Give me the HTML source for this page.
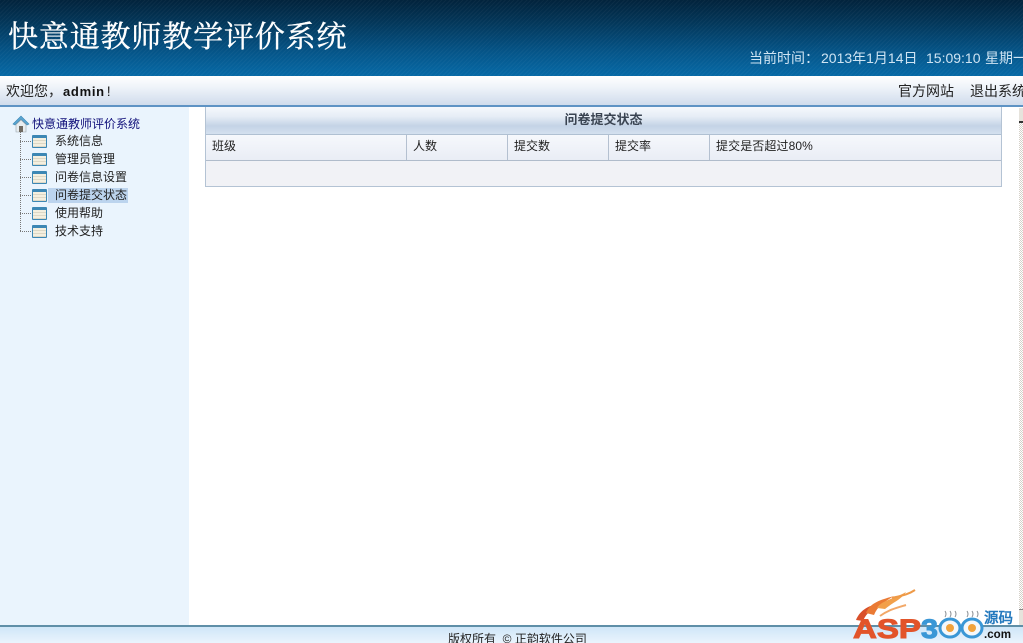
<!DOCTYPE html>
<html lang="zh"><head><meta charset="utf-8"><title>快意通教师教学评价系统</title>
<style>
html,body{margin:0;padding:0;width:1023px;height:643px;overflow:hidden;background:#fff}
body{position:relative;font-family:"Liberation Sans","WenQuanYi Zen Hei","Noto Sans CJK SC",sans-serif;color:#222}
.a{position:absolute;white-space:nowrap}
#hd{left:0;top:0;width:1023px;height:76px;background:repeating-linear-gradient(135deg,rgba(255,255,255,.035) 0 1px,rgba(255,255,255,0) 1px 3px),linear-gradient(#02233c 0,#03375a 30%,#05568a 70%,#0669a6 100%)}
#bar{left:0;top:76px;width:1023px;height:29px;background:linear-gradient(#fff 0,#eef3f9 40%,#d0dcec 100%)}
#ln{left:0;top:105px;width:1023px;height:2px;background:#5e93c4}
#side{left:0;top:107px;width:189px;height:518px;background:#eaf4fd}
#ft{left:0;top:625px;width:1023px;height:2px;background:#5f8fa8}
#ftb{left:0;top:627px;width:1023px;height:16px;background:linear-gradient(#cfe6f8,#eaf4fd)}
#sb{left:1019px;top:108px;width:4px;height:517px;background:repeating-conic-gradient(#d4d0c8 0 25%,#fff 0 50%) 0 0/2px 2px}
#sbt{left:1019px;top:108px;width:4px;height:15px;background:#e6e3dc;border-bottom:2px solid #333;box-sizing:border-box}
#sbb{left:1019px;top:609px;width:4px;height:16px;background:#e6e3dc;border-top:1px solid #888;box-sizing:border-box}
.t{font-size:12px;line-height:14px}
.ic{position:absolute;left:32px;width:15px;height:13px;box-sizing:border-box;border:1.5px solid #3c87b4;border-top-width:3px;border-radius:1px;background:repeating-linear-gradient(#f4efdf 0 2px,#ddd8c6 2px 3px)}
.dh{position:absolute;left:20px;width:11px;border-top:1px dotted #777}
#tb{left:205px;top:107px;width:797px;height:80px;box-sizing:border-box;border:1px solid #b4c3d4;border-top:0;background:#f1f2f6}
#tbh{left:206px;top:107px;width:795px;height:27px;background:linear-gradient(#f5f8fc 0,#e6edf6 35%,#c4d3e6 70%,#d4e0ef 100%);border-bottom:1px solid #b0c0d2;text-align:center;font-size:13px;line-height:26px;font-weight:bold;color:#3a4452}
#tbr{left:206px;top:135px;width:795px;height:25px;background:linear-gradient(#f6f8fc,#e9edf5);border-bottom:1px solid #b0bccb}
.v{position:absolute;top:135px;width:1px;height:25px;background:#b4c0d0}
.c{position:absolute;top:139px;font-size:12px;line-height:14px;color:#222}
.tm{position:absolute;top:50px;font-size:14px;line-height:16px;color:#cfe4f3;white-space:nowrap}
</style></head><body>
<div class="a" id="hd"></div>
<div class="a" style="left:8px;top:20px;font-size:30px;line-height:36px;letter-spacing:.85px;color:#fff;-webkit-text-stroke:.35px #fff;font-family:'Liberation Serif','Noto Serif CJK SC',serif">快意通教师教学评价系统</div>
<div class="tm" style="left:749px">当前时间：</div>
<div class="tm" style="left:821px">2013年1月14日</div>
<div class="tm" style="left:926px">15:09:10</div>
<div class="tm" style="left:985px;width:38px;overflow:hidden">星期一</div>
<div class="a" id="bar"></div>
<div class="a" style="left:6px;top:83px;font-size:14px;line-height:16px;color:#222">欢迎您，<b style="font-size:13px;letter-spacing:.7px;color:#111;margin-left:1px">admin</b><span style="margin-left:2px">!</span></div>
<div class="a" style="left:898px;top:83px;font-size:14px;line-height:16px;color:#222">官方网站</div>
<div class="a" style="left:970px;top:83px;width:53px;overflow:hidden;font-size:14px;line-height:16px;color:#222">退出系统</div>
<div class="a" id="ln"></div>
<div class="a" id="side"></div>

<svg class="a" style="left:12px;top:115px" width="18" height="18" viewBox="0 0 18 18"><path d="M1 9 9 1l8 8-2 1-6-6-6 6z" fill="#5aa6d2" stroke="#3c87b4" stroke-width=".6"/><path d="M4 9.5 9 5l5 4.5V17H4z" fill="#e8edf0" stroke="#9aa6ae" stroke-width=".6"/><rect x="7" y="11" width="4" height="6" fill="#6f6a62"/></svg>
<div class="a t" style="left:32px;top:117px;color:#10107a">快意通教师评价系统</div>
<div class="a" style="left:20px;top:132px;height:99px;border-left:1px dotted #777"></div>
<div class="dh" style="top:141px"></div><div class="ic" style="top:135px"></div><div class="a t" style="left:55px;top:134px">系统信息</div>
<div class="dh" style="top:159px"></div><div class="ic" style="top:153px"></div><div class="a t" style="left:55px;top:152px">管理员管理</div>
<div class="dh" style="top:177px"></div><div class="ic" style="top:171px"></div><div class="a t" style="left:55px;top:170px">问卷信息设置</div>
<div class="dh" style="top:195px"></div><div class="ic" style="top:189px"></div><div class="a" style="left:48px;top:188px;width:80px;height:15px;background:#bcd4ee"></div><div class="a t" style="left:55px;top:188px">问卷提交状态</div>
<div class="dh" style="top:213px"></div><div class="ic" style="top:207px"></div><div class="a t" style="left:55px;top:206px">使用帮助</div>
<div class="dh" style="top:231px"></div><div class="ic" style="top:225px"></div><div class="a t" style="left:55px;top:224px">技术支持</div>

<div class="a" id="tb"></div>
<div class="a" id="tbh">问卷提交状态</div>
<div class="a" id="tbr"></div>
<div class="v" style="left:406px"></div><div class="v" style="left:507px"></div><div class="v" style="left:608px"></div><div class="v" style="left:709px"></div>
<div class="c" style="left:212px">班级</div><div class="c" style="left:413px">人数</div><div class="c" style="left:514px">提交数</div><div class="c" style="left:615px">提交率</div><div class="c" style="left:716px;letter-spacing:.1px">提交是否超过80%</div>

<div class="a" id="sb"></div><div class="a" id="sbt"></div><div class="a" id="sbb"></div>
<div class="a" id="ft"></div><div class="a" id="ftb"></div>
<div class="a t" style="left:448px;top:632px;color:#222">版权所有&nbsp; © 正韵软件公司</div>

<svg class="a" style="left:850px;top:588px" width="173" height="55" viewBox="0 0 173 55">
<path d="M6 32C10 22 20 16 32 16 24 19 16 25 13 33z" fill="#d9502a"/>
<path d="M16 25C20 15 30 12 44 8 36 13 28 17 24 27z" fill="#ea7a34"/>
<path d="M27 20C32 12 42 12 56 4 52 11 42 15 35 21z" fill="#f2a04a"/>
<path d="M42 10C48 8 56 8 65 2" stroke="#ee9a48" stroke-width="2" fill="none"/>
<path d="M30 28C38 22 46 20 56 17" stroke="#f2a868" stroke-width="2" fill="none"/>
<text x="3" y="50" font-family="'Liberation Sans',sans-serif" font-weight="bold" font-size="27" textLength="68" lengthAdjust="spacingAndGlyphs" fill="#e2542a" stroke="#e2542a" stroke-width="1">ASP</text>
<text x="71" y="50" font-family="'Liberation Sans',sans-serif" font-weight="bold" font-size="27" textLength="17" lengthAdjust="spacingAndGlyphs" fill="#3a97d6" stroke="#3a97d6" stroke-width="1">3</text>
<ellipse cx="100" cy="40" rx="10" ry="9" fill="#f4f8fb" stroke="#3a97d6" stroke-width="3"/><circle cx="100" cy="40" r="4" fill="#f0a23c"/>
<ellipse cx="122" cy="40" rx="10" ry="9" fill="#f4f8fb" stroke="#3a97d6" stroke-width="3"/><circle cx="122" cy="40" r="4" fill="#f0a23c"/>
<path d="M95 23q2 3 0 6M100 23q2 3 0 6M105 23q2 3 0 6M117 23q2 3 0 6M122 23q2 3 0 6M127 23q2 3 0 6" stroke="#8a8f94" stroke-width="1" fill="none"/>
<text x="134" y="35" font-family="'Liberation Sans','WenQuanYi Zen Hei',sans-serif" font-weight="bold" font-size="14.5" fill="#2479be">源码</text>
<text x="134" y="50" font-family="'Liberation Sans',sans-serif" font-weight="bold" font-size="12" textLength="27" lengthAdjust="spacingAndGlyphs" fill="#111">.com</text>
</svg>
</body></html>
